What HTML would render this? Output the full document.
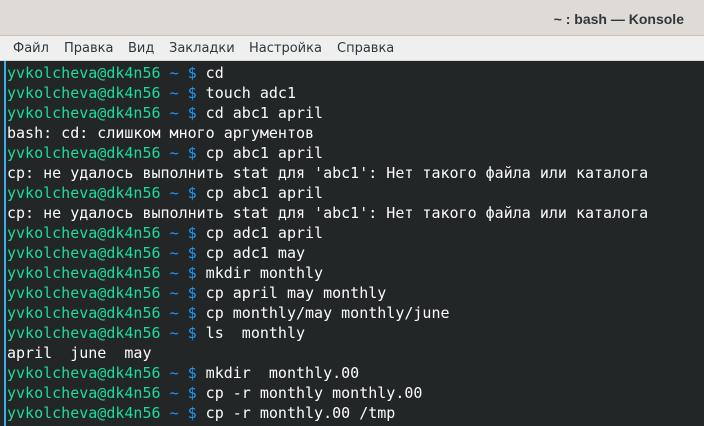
<!DOCTYPE html>
<html><head><meta charset="utf-8"><style>
html,body{margin:0;padding:0;width:704px;height:426px;overflow:hidden;background:#232627}
#title{position:absolute;left:0;top:0;width:704px;height:36px;background:#dedbd7;border-bottom:1px solid #c8c2ba;box-sizing:border-box}
#title span{position:absolute;right:20px;top:11px;font:bold 14px "Liberation Sans",sans-serif;color:#31363b}
#menu{position:absolute;left:0;top:36px;width:704px;height:25px;background:#efefef;border-bottom:1px solid #d8d8d8;box-sizing:border-box;font:13px "DejaVu Sans","Liberation Sans",sans-serif;color:#31363b}
#menu span{position:absolute;top:5px}
#term{position:absolute;left:0;top:61px;width:704px;height:365px;background:#232627}
#bar{position:absolute;left:4px;top:61px;width:2px;height:365px;background:#3daee9}
pre{position:absolute;left:7px;top:63px;margin:0;font:15px/20px "DejaVu Sans Mono","Liberation Mono",monospace;color:#fcfcfc}
.g{color:#1cdc9a}.b{color:#1d99f3}
</style></head><body>
<div id="title"><span>~ : bash — Konsole</span></div>
<div id="menu"><span style="left:13px">Файл</span><span style="left:64px">Правка</span><span style="left:128px">Вид</span><span style="left:169px">Закладки</span><span style="left:249px">Настройка</span><span style="left:337px">Справка</span></div>
<div id="term"></div><div id="bar"></div>
<pre><span class="g">yvkolcheva@dk4n56</span> <span class="b">~ $</span> cd
<span class="g">yvkolcheva@dk4n56</span> <span class="b">~ $</span> touch adc1
<span class="g">yvkolcheva@dk4n56</span> <span class="b">~ $</span> cd abc1 april
bash: cd: слишком много аргументов
<span class="g">yvkolcheva@dk4n56</span> <span class="b">~ $</span> cp abc1 april
cp: не удалось выполнить stat для 'abc1': Нет такого файла или каталога
<span class="g">yvkolcheva@dk4n56</span> <span class="b">~ $</span> cp abc1 april
cp: не удалось выполнить stat для 'abc1': Нет такого файла или каталога
<span class="g">yvkolcheva@dk4n56</span> <span class="b">~ $</span> cp adc1 april
<span class="g">yvkolcheva@dk4n56</span> <span class="b">~ $</span> cp adc1 may
<span class="g">yvkolcheva@dk4n56</span> <span class="b">~ $</span> mkdir monthly
<span class="g">yvkolcheva@dk4n56</span> <span class="b">~ $</span> cp april may monthly
<span class="g">yvkolcheva@dk4n56</span> <span class="b">~ $</span> cp monthly/may monthly/june
<span class="g">yvkolcheva@dk4n56</span> <span class="b">~ $</span> ls  monthly
april  june  may
<span class="g">yvkolcheva@dk4n56</span> <span class="b">~ $</span> mkdir  monthly.00
<span class="g">yvkolcheva@dk4n56</span> <span class="b">~ $</span> cp -r monthly monthly.00
<span class="g">yvkolcheva@dk4n56</span> <span class="b">~ $</span> cp -r monthly.00 /tmp</pre>
</body></html>
